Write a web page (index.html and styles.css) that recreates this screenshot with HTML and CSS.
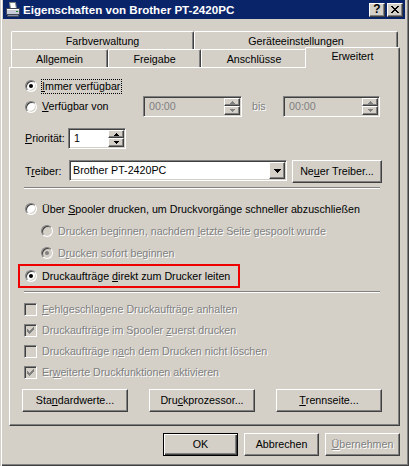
FILE: index.html
```html
<!DOCTYPE html>
<html lang="de">
<head>
<meta charset="utf-8">
<title>Eigenschaften von Brother PT-2420PC</title>
<link rel="stylesheet" href="styles.css">
</head>
<body>
<div class="window">
  <div class="titlebar">
    <svg class="appicon" width="16" height="16" viewBox="0 0 16 16">
      <path d="M4.5 0.5h6l1 6.5h-6z" fill="#fff" stroke="#808080"/>
      <rect x="1.5" y="6.5" width="13" height="6" fill="#c8cbd8" stroke="#404858"/>
      <rect x="2" y="7" width="12" height="1" fill="#fff"/>
      <rect x="2.5" y="12.5" width="11" height="2" fill="#8890a8" stroke="#404858"/>
      <rect x="11" y="9" width="2" height="1" fill="#2a8a2a"/>
    </svg>
    <span class="title">Eigenschaften von Brother PT-2420PC</span>
    <div class="capbtns">
      <div class="capbtn help">?</div>
      <div class="capbtn">
        <svg width="8" height="7" viewBox="0 0 8 7"><path d="M0 0h2v1H0zM6 0h2v1H6zM1 1h2v1H1zM5 1h2v1H5zM2 2h4v1H2zM3 3h2v1H3zM2 4h4v1H2zM1 5h2v1H1zM5 5h2v1H5zM0 6h2v1H0zM6 6h2v1H6z" fill="#000"/></svg>
      </div>
    </div>
  </div>

  <div class="client">
    <div class="tabs">
      <div class="tabrow">
        <div class="tab w183">Farbverwaltung</div>
        <div class="tab w204">Geräteeinstellungen</div>
      </div>
      <div class="tabrow">
        <div class="tab w97">Allgemein</div>
        <div class="tab w93">Freigabe</div>
        <div class="tab w106">Anschlüsse</div>
        <div class="tab sel">Erweitert</div>
      </div>
    </div>

    <div class="panel">
      <div class="row h18">
        <span class="radio on"></span><span class="lbl focus"><u>I</u>mmer verfügbar</span>
      </div>
      <div class="row h21 mt1">
        <div class="opt">
          <span class="radio"></span><span class="lbl"><u>V</u>erfügbar von</span>
        </div>
        <div class="edit off w99">
          <span class="txt gray">00:00</span>
          <div class="spin">
            <div class="sb up"><svg width="5" height="3" viewBox="0 0 5 3"><path d="M2 0h1v1H2zM1 1h3v1H1zM0 2h5v1H0z" fill="#808080"/></svg></div>
            <div class="sb dn"><svg width="5" height="3" viewBox="0 0 5 3"><path d="M0 0h5v1H0zM1 1h3v1H1zM2 2h1v1H2z" fill="#808080"/></svg></div>
          </div>
        </div>
        <div class="bis dis">bis</div>
        <div class="edit off w97">
          <span class="txt gray">00:00</span>
          <div class="spin">
            <div class="sb up"><svg width="5" height="3" viewBox="0 0 5 3"><path d="M2 0h1v1H2zM1 1h3v1H1zM0 2h5v1H0z" fill="#808080"/></svg></div>
            <div class="sb dn"><svg width="5" height="3" viewBox="0 0 5 3"><path d="M0 0h5v1H0zM1 1h3v1H1zM2 2h1v1H2z" fill="#808080"/></svg></div>
          </div>
        </div>
      </div>

      <div class="row h21 mt11">
        <div class="flabel w44"><u>P</u>riorität:</div>
        <div class="edit w58">
          <span class="txt">1</span>
          <div class="spin">
            <div class="sb up"><svg width="5" height="3" viewBox="0 0 5 3"><path d="M2 0h1v1H2zM1 1h3v1H1zM0 2h5v1H0z" fill="#000"/></svg></div>
            <div class="sb dn"><svg width="5" height="3" viewBox="0 0 5 3"><path d="M0 0h5v1H0zM1 1h3v1H1zM2 2h1v1H2z" fill="#000"/></svg></div>
          </div>
        </div>
      </div>

      <div class="row h23 mt11">
        <div class="flabel w45">T<u>r</u>eiber:</div>
        <div class="edit combo w218">
          <span class="txt">Brother PT-2420PC</span>
          <div class="ddb"><svg width="7" height="4" viewBox="0 0 7 4"><path d="M0 0h7v1H0zM1 1h5v1H1zM2 2h3v1H2zM3 3h1v1H3z" fill="#000"/></svg></div>
        </div>
        <div class="btn w90 ml5">Ne<u>u</u>er Treiber...</div>
      </div>

      <div class="sep mt4"></div>

      <div class="row h18 mt11">
        <span class="radio"></span><span class="lbl">Über <u>S</u>pooler drucken, um Druckvorgänge schneller abzuschließen</span>
      </div>
      <div class="row h18 mt4 sub">
        <span class="radio off"></span><span class="lbl dis">Drucken beginnen, nachdem <u>l</u>etzte Seite gespoolt wurde</span>
      </div>
      <div class="row h18 mt4 sub">
        <span class="radio off on"></span><span class="lbl dis">D<u>r</u>ucken sofort beginnen</span>
      </div>
      <div class="hl">
        <span class="radio on"></span><span class="lbl">Druckaufträge <u>d</u>irekt zum Drucker leiten</span>
      </div>

      <div class="sep mt3"></div>

      <div class="row chkrow mt6">
        <span class="chk"></span><span class="clbl dis"><u>F</u>ehlgeschlagene Druckaufträge anhalten</span>
      </div>
      <div class="row chkrow">
        <span class="chk"><svg width="7" height="7" viewBox="0 0 7 7"><path d="M6 0h1v1H6zM5 1h2v1H5zM0 2h1v1H0zM4 2h3v1H4zM0 3h2v1H0zM3 3h3v1H3zM0 4h5v1H0zM1 5h3v1H1zM2 6h1v1H2z" fill="#808080"/></svg></span><span class="clbl dis">Druckaufträge im Spooler <u>z</u>uerst drucken</span>
      </div>
      <div class="row chkrow">
        <span class="chk"></span><span class="clbl dis">Druckaufträge n<u>a</u>ch dem Drucken nicht löschen</span>
      </div>
      <div class="row chkrow">
        <span class="chk"><svg width="7" height="7" viewBox="0 0 7 7"><path d="M6 0h1v1H6zM5 1h2v1H5zM0 2h1v1H0zM4 2h3v1H4zM0 3h2v1H0zM3 3h3v1H3zM0 4h5v1H0zM1 5h3v1H1zM2 6h1v1H2z" fill="#808080"/></svg></span><span class="clbl dis">Er<u>w</u>eiterte Druckfunktionen aktivieren</span>
      </div>

      <div class="btnrow mt6">
        <div class="btn w106">Sta<u>n</u>dardwerte...</div>
        <div class="btn w106">Dru<u>c</u>kprozessor...</div>
        <div class="btn w106"><u>T</u>rennseite...</div>
      </div>
    </div>

    <div class="dlg">
      <div class="btn def w75">OK</div>
      <div class="btn w75">Abbrechen</div>
      <div class="btn w75 dis"><u>Ü</u>bernehmen</div>
    </div>
  </div>
</div>
</body>
</html>
```
FILE: styles.css
```css
* { box-sizing: border-box; }

body {
  margin: 0;
  background: #d4d0c8;
  font-family: "Liberation Sans", Arial, sans-serif;
  font-size: 10.7px;
  line-height: 13px;
  color: #000;
}

u { text-underline-offset: 1px; }

.window {
  width: 409px;
  height: 466px;
  padding: 0 4px 4px 3px;
  background: #d4d0c8;
  box-shadow: inset 1px 0 #d4d0c8, inset 2px 0 #fff, inset -1px -1px #404040, inset -2px -2px #808080;
}

/* title bar */
.titlebar {
  height: 19px;
  background: #0a246a;
  display: flex;
  align-items: center;
  padding: 0 2px;
  color: #fff;
}
.appicon { flex: none; display: block; }
.title {
  margin-left: 2px;
  font-weight: bold;
  font-size: 11.6px;
  white-space: nowrap;
}
.capbtns { margin-left: auto; display: flex; gap: 2px; }
.capbtn {
  width: 16px;
  height: 14px;
  background: #d4d0c8;
  border: 1px solid;
  border-color: #fff #404040 #404040 #fff;
  box-shadow: inset -1px -1px #808080;
  display: flex;
  align-items: center;
  justify-content: center;
  color: #000;
}
.capbtn svg { display: block; }
.help { font-weight: bold; font-size: 12px; line-height: 12px; padding-bottom: 1px; }

/* client */
.client { padding: 0 5px 0 6px; }

.tabs { padding: 12px 0 0 2px; }
.tabrow { display: flex; height: 18px; }
.tab {
  flex: none;
  height: 18px;
  border-top: 1px solid #fff;
  border-left: 1px solid #fff;
  border-right: 1px solid #404040;
  border-radius: 2px 2px 0 0;
  box-shadow: inset -1px 0 #808080;
  background: #d4d0c8;
  text-align: center;
  padding-top: 3px;
  white-space: nowrap;
}
.tab.sel {
  width: 95px;
  height: 21px;
  margin: -2px 0 0 -2px;
  padding-top: 2px;
  position: relative;
  z-index: 1;
}
.w183 { width: 183px; }
.w204 { width: 204px; }
.w97 { width: 97px; }
.w93 { width: 93px; }
.w106 { width: 106px; }

.panel {
  height: 359px;
  border: 1px solid;
  border-color: #fff #404040 #404040 #fff;
  box-shadow: inset -1px -1px #808080;
  padding: 9px 17px 0 14px;
}

.row { display: flex; align-items: center; }
.h18 { height: 18px; }
.h21 { height: 21px; }
.h23 { height: 23px; }
.mt1 { margin-top: 1px; }
.mt3 { margin-top: 3px; }
.mt4 { margin-top: 4px; }
.mt6 { margin-top: 6px; }
.mt11 { margin-top: 11px; }
.ml5 { margin-left: 5px; }

/* radio */
.radio {
  flex: none;
  position: relative;
  width: 12px;
  height: 12px;
  margin-left: 1px;
  border-radius: 50%;
  border: 1px solid;
  border-color: #808080 #fff #fff #808080;
  box-shadow: inset 1px 1px #404040, inset -1px -1px #d4d0c8;
  background: #fff;
}
.radio.on::after {
  content: "";
  position: absolute;
  left: 3px;
  top: 3px;
  width: 4px;
  height: 4px;
  border-radius: 50%;
  background: #000;
}
.radio.off { background: #d4d0c8; }
.radio.off.on::after { background: #808080; }
.sub .radio { margin-left: 17px; }

.lbl {
  margin-left: 4px;
  border: 1px solid transparent;
  padding-right: 1px;
  white-space: nowrap;
}
.focus { border: 1px dotted #000; }

.dis { color: #808080; text-shadow: 1px 1px #fff; }
.gray { color: #808080; }

.opt { flex: none; width: 119px; display: flex; align-items: center; }
.bis { flex: none; width: 41px; padding-left: 10px; }
.flabel { flex: none; padding-left: 1px; white-space: nowrap; }
.w44 { width: 44px; }
.w45 { width: 45px; }

/* edit fields */
.edit {
  flex: none;
  height: 21px;
  border: 1px solid;
  border-color: #808080 #fff #fff #808080;
  box-shadow: inset 1px 1px #404040, inset -1px -1px #d4d0c8;
  background: #fff;
  display: flex;
  align-items: center;
  padding: 1px;
}
.edit.off { background: #d4d0c8; }
.edit .txt { padding-left: 4px; white-space: nowrap; }
.combo { align-self: flex-start; }
.combo .txt { padding-left: 2px; }
.w99 { width: 99px; }
.w97 { width: 97px; }
.w58 { width: 58px; }
.w218 { width: 218px; }

.spin {
  margin-left: auto;
  width: 16px;
  height: 17px;
  display: flex;
  flex-direction: column;
}
.sb, .ddb {
  border: 1px solid;
  border-color: #fff #404040 #404040 #fff;
  box-shadow: inset -1px -1px #808080;
  background: #d4d0c8;
  display: flex;
  align-items: center;
  justify-content: center;
}
.sb svg, .ddb svg, .chk svg { display: block; }
.sb.up { height: 8px; }
.sb.dn { height: 9px; }
.ddb { margin-left: auto; width: 16px; height: 17px; }

/* buttons */
.btn {
  flex: none;
  height: 23px;
  border: 1px solid;
  border-color: #fff #404040 #404040 #fff;
  box-shadow: inset -1px -1px #808080;
  background: #d4d0c8;
  display: flex;
  align-items: center;
  justify-content: center;
  white-space: nowrap;
}
.btn.def {
  border: 1px solid #000;
  box-shadow: inset 1px 1px #fff, inset -1px -1px #404040, inset -2px -2px #808080;
}
.w90 { width: 90px; }
.w75 { width: 75px; }

.sep {
  margin-right: 2px;
  border-top: 1px solid #808080;
  border-bottom: 1px solid #fff;
}

/* highlight box */
.hl {
  margin-top: 2px;
  margin-left: -6px;
  width: 222px;
  height: 24px;
  border: 2px solid #ee0000;
  padding-left: 4px;
  display: flex;
  align-items: center;
}

/* checkboxes */
.chkrow { height: 21px; }
.chk {
  flex: none;
  width: 13px;
  height: 13px;
  border: 1px solid;
  border-color: #808080 #fff #fff #808080;
  box-shadow: inset 1px 1px #404040, inset -1px -1px #d4d0c8;
  background: #d4d0c8;
  padding: 2px;
}
.clbl { margin-left: 5px; white-space: nowrap; }

.btnrow {
  display: flex;
  justify-content: space-between;
  margin-left: -2px;
}

.dlg {
  display: flex;
  justify-content: flex-end;
  gap: 6px;
  margin-top: 7px;
}
```
